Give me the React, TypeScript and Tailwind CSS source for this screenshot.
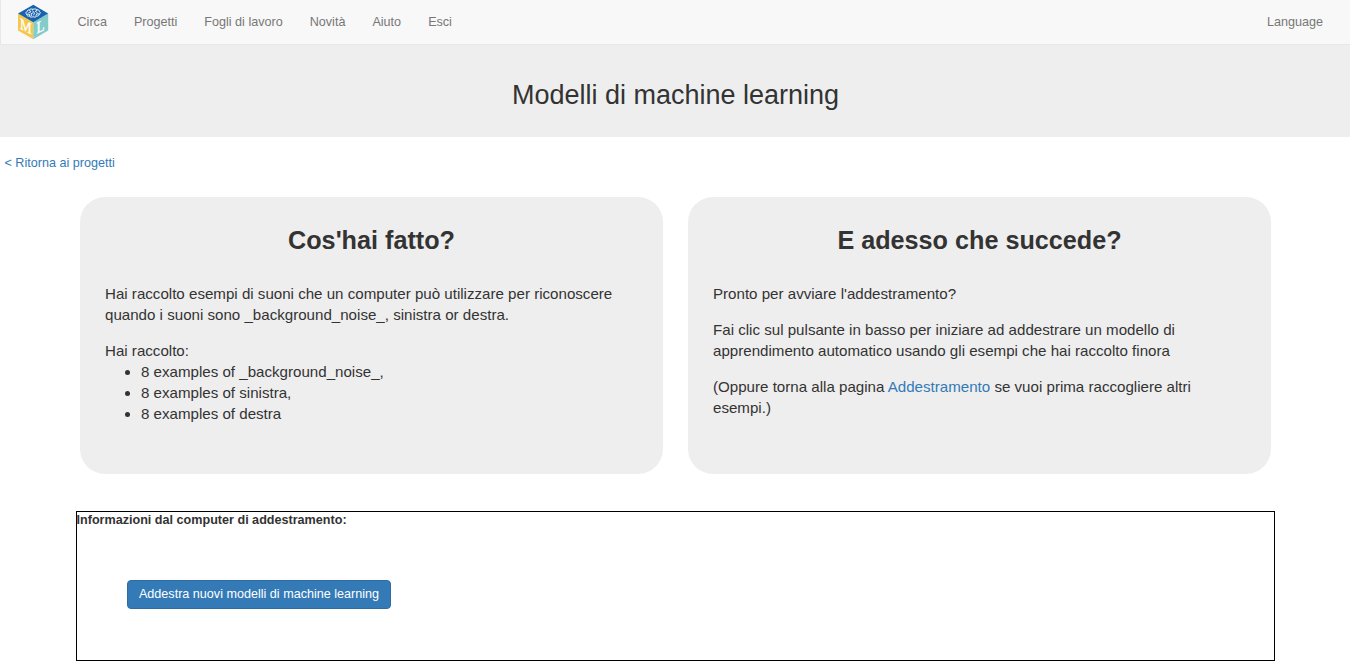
import type { ReactNode } from "react";

const navItems = ["Circa", "Progetti", "Fogli di lavoro", "Novità", "Aiuto", "Esci"];
const examples = [
  "8 examples of _background_noise_,",
  "8 examples of sinistra,",
  "8 examples of destra",
];

function Logo() {
  return (
    <svg width="32" height="36" viewBox="0 0 32 36" aria-hidden="true">
      <path d="M1 9.5 16.3 18v17.2L1 26.6Z" fill="#f5c84c" />
      <path d="M16.3 18 31.2 9.5v17.1L16.3 35.2Z" fill="#84ccca" />
      <path d="M16.3.8 31.2 9.5 16.3 18.3 1 9.5Z" fill="#1863ad" />
      <g fill="none" stroke="#fff" strokeWidth=".9" strokeLinecap="round">
        <path d="M15.8 5.3c-1.2-.8-3-.3-3.3.6-1.7-.1-2.5.8-2.2 1.7-1.9.5-1.9 2.1-.6 2.7-.1 1.5 1.3 2 2.6 1.7.8 1.4 2.8 1.4 3.7.6 1.1.9 3.1.6 3.7-.5 1.7.1 2.6-.8 2.4-1.8 1.6-.6 1.6-2.2.2-2.8.1-1.2-1-1.8-2.3-1.6-.8-1.2-3.2-1.4-4.2-.6Z" />
        <path d="M12.5 6.2l1.4 1.7-2 .6M10.2 10.2l2-.2.6 1.9M15.9 8.9l-1.9.9.4 1.8M20 6l-1.7 1.3 1.8 1.2M22 10l-2.2-.2-.8 1.7M15.6 6.8l2 2.4-1 1.8" />
      </g>
      <g
        fill="#fff"
        className="font-['Liberation_Serif',serif]"
        stroke="#fff"
        strokeWidth=".4"
      >
        <text fontSize="16" transform="matrix(.82 .42 0 1 2.9 24.6)">M</text>
        <text fontSize="16.5" transform="matrix(.8 -.38 0 1 19.6 29.7)">L</text>
      </g>
    </svg>
  );
}

function Card({ title, children }: { title: string; children: ReactNode }) {
  return (
    <section className="h-[277px] flex-1 rounded-[25px] bg-[#eeeeee] px-[25px] pt-[29px] text-[15.12px] leading-[21px]">
      <h2 className="mb-[29px] text-center text-[25.2px] leading-7 font-bold">{title}</h2>
      {children}
    </section>
  );
}

export default function App() {
  return (
    <div className="h-[665px] overflow-hidden bg-white font-['Liberation_Sans',Arial,sans-serif] text-[12.6px] leading-[18px] text-[#333]">
      <nav className="flex h-[45px] items-center border border-t-0 border-r-0 border-[#e7e7e7] bg-[#f8f8f8] pr-[27px] text-[#777]">
        <a href="#" className="mr-[28.5px] ml-4 block h-[36px]">
          <Logo />
        </a>
        <ul className="flex gap-[27px]">
          {navItems.map((item) => (
            <li key={item}>
              <a href="#">{item}</a>
            </li>
          ))}
        </ul>
        <a href="#" className="ml-auto">
          Language
        </a>
      </nav>
      <header className="flex h-[92px] items-center justify-center bg-[#eeeeee] pt-[8px] pl-px">
        <h1 className="text-[27px] leading-[30px]">Modelli di machine learning</h1>
      </header>
      <div className="pt-[17px] pl-[4.5px]">
        <a href="#" className="text-[#337ab7]">
          &lt; Ritorna ai progetti
        </a>
      </div>
      <main>
        <div className="mt-[25px] flex gap-[25px] pr-[79px] pl-20">
          <Card title="Cos'hai fatto?">
            <p>
              Hai raccolto esempi di suoni che un computer può utilizzare per riconoscere quando i
              suoni sono _background_noise_, sinistra or destra.
            </p>
            <p className="mt-[15px]">Hai raccolto:</p>
            <ul className="list-disc pl-9">
              {examples.map((example) => (
                <li key={example}>{example}</li>
              ))}
            </ul>
          </Card>
          <Card title="E adesso che succede?">
            <p>Pronto per avviare l'addestramento?</p>
            <p className="mt-[15px]">
              Fai clic sul pulsante in basso per iniziare ad addestrare un modello di apprendimento
              automatico usando gli esempi che hai raccolto finora
            </p>
            <p className="mt-[15px]">
              (Oppure torna alla pagina{" "}
              <a href="#" className="text-[#337ab7]">
                Addestramento
              </a>{" "}
              se vuoi prima raccogliere altri esempi.)
            </p>
          </Card>
        </div>
        <section className="mt-[37px] mr-[75px] ml-[76px] h-[150px] border border-black">
          <h3 className="-ml-[0.5px] leading-[17px] font-bold">
            Informazioni dal computer di addestramento:
          </h3>
          <button className="mt-[51px] ml-[50px] flex h-[29px] w-[264px] items-center justify-center rounded-[4px] border border-[#2e6da4] bg-[#337ab7] pb-px text-white">
            Addestra nuovi modelli di machine learning
          </button>
        </section>
      </main>
    </div>
  );
}
